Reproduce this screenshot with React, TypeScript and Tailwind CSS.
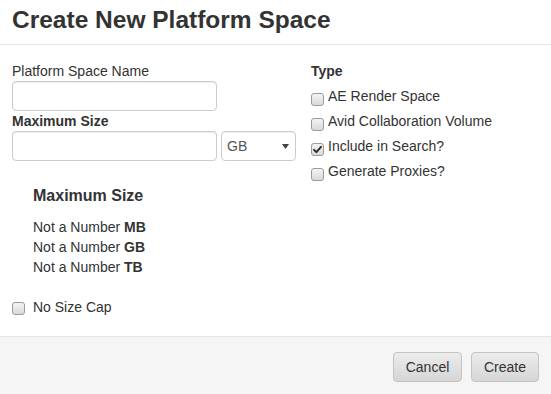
import React from "react";

function Box({ checked = false }: { checked?: boolean }) {
  return (
    <span className="relative inline-block w-[13px] h-[13px] shrink-0 rounded-[3px] border border-[#9a9a9a] bg-gradient-to-b from-[#f4f4f4] to-[#d9d9d9]">
      {checked && (
        <svg viewBox="0 0 13 13" className="absolute left-[-1px] top-[-1px] w-[13px] h-[13px]">
          <path d="M3 6.8 L5.4 9.2 L10 3.8" fill="none" stroke="#2a2a2a" strokeWidth="1.9" strokeLinecap="round" strokeLinejoin="round" />
        </svg>
      )}
    </span>
  );
}

function CheckRow({ label, checked = false }: { label: string; checked?: boolean }) {
  return (
    <div className="mt-[5px] flex items-start h-[20px] leading-[20px]">
      <span className="mt-[7px] mr-[4px] flex">
        <Box checked={checked} />
      </span>
      <span>{label}</span>
    </div>
  );
}

export default function App() {
  return (
    <div
      className="w-[551px] h-[394px] bg-white text-[#333] text-[14px] flex flex-col overflow-hidden"
      style={{ fontFamily: '"Liberation Sans", Arial, sans-serif' }}
    >
      <div className="h-[45px] shrink-0 border-b border-[#e5e5e5] px-[12px] pt-[7px]">
        <h1 className="text-[24.5px] font-bold leading-[26px] text-[#333]">Create New Platform Space</h1>
      </div>

      <div className="flex-1 flex px-[12px] pt-[16px]">
        <div className="w-[299px] flex flex-col">
          <label className="leading-[20px]">Platform Space Name</label>
          <input className="w-[205px] h-[30px] border border-[#ccc] rounded-[4px] bg-white outline-none shadow-[inset_0_1px_1px_rgba(0,0,0,0.075)]" />
          <label className="leading-[20px] font-bold">Maximum Size</label>
          <div className="flex gap-[4px]">
            <input className="w-[205px] h-[30px] border border-[#ccc] rounded-[4px] bg-white outline-none shadow-[inset_0_1px_1px_rgba(0,0,0,0.075)]" />
            <div className="w-[75px] h-[30px] border border-[#ccc] rounded-[4px] bg-white flex items-center justify-between pl-[5px] pr-[6px] shadow-[inset_0_1px_1px_rgba(0,0,0,0.075)]">
              <span className="text-[#555]">GB</span>
              <svg viewBox="0 0 7 5" className="w-[7px] h-[5px]">
                <path d="M0 0 H7 L3.5 5 Z" fill="#444" />
              </svg>
            </div>
          </div>

          <div className="ml-[21px] mt-[25px]">
            <div className="text-[16px] font-bold leading-[20px]">Maximum Size</div>
            <div className="mt-[11px] leading-[20px]">
              <div>
                Not a Number <b>MB</b>
              </div>
              <div>
                Not a Number <b>GB</b>
              </div>
              <div>
                Not a Number <b>TB</b>
              </div>
            </div>
          </div>

          <div className="mt-[20px] flex items-start leading-[20px]">
            <span className="mt-[5px] mr-[8px] flex">
              <Box />
            </span>
            <span>No Size Cap</span>
          </div>
        </div>

        <div className="flex flex-col">
          <div className="font-bold leading-[20px]">Type</div>
          <CheckRow label="AE Render Space" />
          <CheckRow label="Avid Collaboration Volume" />
          <CheckRow label="Include in Search?" checked />
          <CheckRow label="Generate Proxies?" />
        </div>
      </div>

      <div className="h-[58px] shrink-0 border-t border-[#e5e5e5] bg-[#f5f5f5] flex justify-end items-start gap-[9px] pt-[15px] pr-[12px]">
        <button className="w-[69px] h-[30px] rounded-[4px] border border-[#c4c4c4] bg-gradient-to-b from-[#ececec] to-[#d6d6d6] text-[#333] text-[14px]">
          Cancel
        </button>
        <button className="w-[68px] h-[30px] rounded-[4px] border border-[#c4c4c4] bg-gradient-to-b from-[#ececec] to-[#d6d6d6] text-[#333] text-[14px]">
          Create
        </button>
      </div>
    </div>
  );
}
